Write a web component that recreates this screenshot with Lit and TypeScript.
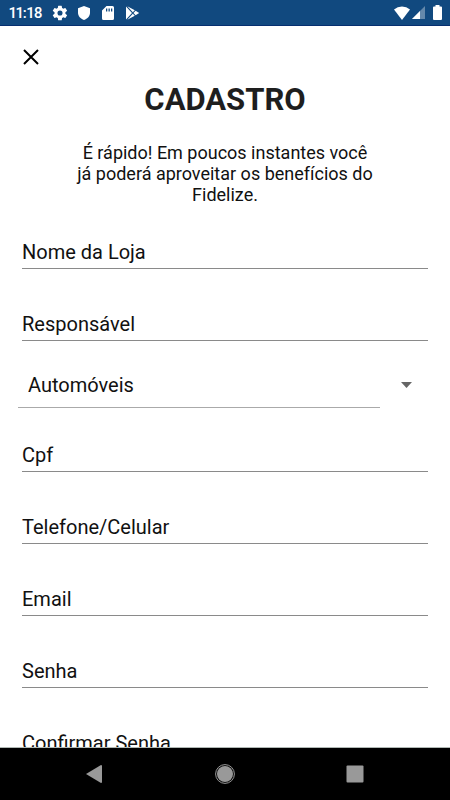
import { LitElement, html, css, svg } from "lit";
import { customElement, property } from "lit/decorators.js";

@customElement("status-bar")
class StatusBar extends LitElement {
  static styles = css`
    :host {
      display: flex;
      align-items: center;
      justify-content: space-between;
      box-sizing: border-box;
      height: 26px;
      padding: 0 8px 0 9px;
      background: #11497f;
      border-bottom: 1px solid #062f70;
      color: #fff;
      flex: none;
    }
    .left,
    .right {
      display: flex;
      align-items: center;
    }
    .left {
      gap: 8px;
    }
    .right {
      gap: 2px;
    }
    time {
      width: 35px;
      font: 500 15px/24px Roboto, sans-serif;
      font-variant-numeric: proportional-nums;
    }
    svg {
      display: block;
      fill: #fff;
    }
    .battery {
      margin-left: 6px;
    }
  `;

  render() {
    return html`
      <div class="left">
        <time>11:18</time>
        <svg width="16" height="16" viewBox="1 1 22 22" aria-label="Configurações">
          <path d="M19.4 13a7.6 7.6 0 0 0 0-2l2.1-1.6a.5.5 0 0 0 .1-.7l-2-3.4a.5.5 0 0 0-.6-.2l-2.5 1a7.3 7.3 0 0 0-1.7-1l-.4-2.6a.5.5 0 0 0-.5-.5h-4a.5.5 0 0 0-.5.5L9 5.1a7.3 7.3 0 0 0-1.7 1l-2.5-1a.5.5 0 0 0-.6.2l-2 3.4a.5.5 0 0 0 .1.7L4.5 11a7.6 7.6 0 0 0 0 2l-2.2 1.6a.5.5 0 0 0-.1.7l2 3.4c.1.2.4.3.6.2l2.5-1a7.3 7.3 0 0 0 1.7 1l.4 2.6c0 .3.2.5.5.5h4c.3 0 .5-.2.5-.5l.4-2.6a7.3 7.3 0 0 0 1.7-1l2.5 1c.2.1.5 0 .6-.2l2-3.4a.5.5 0 0 0-.1-.7zM12 15.5a3.5 3.5 0 1 1 0-7 3.5 3.5 0 0 1 0 7z" />
        </svg>
        <svg width="16" height="16" viewBox="0 0 16 16" aria-label="Segurança">
          <path d="M8 1l6 2.300v4.500c0 3.300-2.500 6-6 7.200-3.500-1.200-6-3.900-6-7.200V3.300z" />
        </svg>
        <svg width="16" height="16" viewBox="0 0 16 16" aria-label="Cartão SD">
          <path fill-rule="evenodd" d="M6.500 1H12.500q1.500 0 1.500 1.500v11q0 1.500-1.500 1.500h-9Q2 15 2 13.500v-8zM6 3.500v3h1.300v-3zm2.500 0v3h1.300v-3zm2.500 0v3h1.300v-3z" />
        </svg>
        <svg width="16" height="16" viewBox="0 0 16 16" aria-label="Play Store">
          <path d="M2 1.500v13l6-6.500zM3.300 1.300l5.500 6 2-2zM3.300 14.700l5.500-6 2 2zM11.600 5.800L9.500 8l2.100 2.200L15.200 8z" />
        </svg>
      </div>
      <div class="right">
        <svg width="16" height="14" viewBox="0 0 16 14" aria-label="Wi-Fi">
          <path d="M8 14L0 3.500Q3.500 0.500 8 0.500T16 3.500z" />
        </svg>
        <svg width="13" height="13" viewBox="0 0 13 13" aria-label="Sinal">
          <path d="M13 0v13H0z" fill-opacity="0.35" />
          <path d="M8 5v8H0z" />
        </svg>
        <svg class="battery" width="9" height="15" viewBox="0 0 9 15" aria-label="Bateria">
          <path d="M2.500 0h4v1.500H8q1 0 1 1v11.500q0 1-1 1H1q-1 0-1-1V2.500q0-1 1-1h1.500z" />
        </svg>
      </div>
    `;
  }
}

@customElement("text-field")
class TextField extends LitElement {
  @property() label = "";
  @property() type = "text";

  static styles = css`
    :host {
      display: block;
    }
    input {
      display: block;
      box-sizing: border-box;
      width: 100%;
      height: 34px;
      padding: 0;
      border: 0;
      border-bottom: 1px solid #8a8a8a;
      border-radius: 0;
      outline: 0;
      background: none;
      color: #111;
      font: 400 20px/24px Roboto, sans-serif;
    }
    input::placeholder {
      color: #111;
      opacity: 1;
    }
    input:focus {
      border-bottom-color: #11497f;
    }
  `;

  render() {
    return html`<input type=${this.type} placeholder=${this.label} aria-label=${this.label} />`;
  }
}

@customElement("nav-bar")
class NavBar extends LitElement {
  static styles = css`
    :host {
      display: flex;
      justify-content: center;
      align-items: center;
      box-sizing: border-box;
      height: 53px;
      flex: none;
      gap: 82px;
      background: #000;
      border-top: 1px solid #b0b8b4;
    }
    button {
      display: grid;
      place-items: center;
      width: 48px;
      height: 48px;
      padding: 0;
      border: 0;
      background: none;
    }
    svg {
      display: block;
      fill: #999;
    }
  `;

  render() {
    const shapes = [
      { name: "Voltar", shape: svg`<path d="M1 10L16 1q1 0 1 1v16q0 1-1 1z" />` },
      {
        name: "Início",
        shape: svg`<circle cx="10" cy="10" r="8" /><circle cx="10" cy="10" r="9.4" fill="none" stroke="#999" />`,
      },
      { name: "Recentes", shape: svg`<rect x="1.5" y="1.5" width="17" height="17" rx="1" />` },
    ];
    return shapes.map(
      (s) => html`<button aria-label=${s.name}>
        <svg width="20" height="20" viewBox="0 0 20 20">${s.shape}</svg>
      </button>`
    );
  }
}

@customElement("app-root")
class AppRoot extends LitElement {
  static styles = css`
    :host {
      display: flex;
      flex-direction: column;
      height: 100vh;
      background: #fff;
      color: #111;
      font-family: Roboto, sans-serif;
    }
    main {
      flex: 1;
      min-height: 0;
      overflow-y: auto;
      scrollbar-width: none;
    }
    .close {
      display: grid;
      place-items: center;
      width: 32px;
      height: 32px;
      margin: 15px 0 0 15px;
      padding: 0;
      border: 0;
      background: none;
    }
    h1 {
      margin: 9px 0 0;
      text-align: center;
      color: #1e1e1e;
      font-size: 31px;
      line-height: 36px;
      font-weight: 700;
    }
    .intro {
      max-width: 298px;
      margin: 24px auto 0;
      text-align: center;
      font-size: 18px;
      line-height: 21px;
    }
    form {
      display: flex;
      flex-direction: column;
      gap: 38px;
      margin: 30px 22px 38px;
    }
    .picker {
      display: flex;
      align-items: center;
      margin: -17px 0 -8px -4px;
    }
    select {
      flex: 1;
      height: 46px;
      padding: 0 0 0 10px;
      border: 0;
      border-bottom: 1px solid #aaa;
      border-radius: 0;
      outline: 0;
      appearance: none;
      background: none;
      color: #111;
      font: 400 20px/24px Roboto, sans-serif;
    }
    .arrow {
      flex: none;
      padding: 0 16px 0 21px;
      fill: #666;
    }
  `;

  render() {
    return html`
      <status-bar></status-bar>
      <main>
        <button class="close" aria-label="Fechar">
          <svg width="16" height="16" viewBox="0 0 16 16">
            <path d="M1 1L15 15M15 1L1 15" fill="none" stroke="#000" stroke-width="2" />
          </svg>
        </button>
        <h1>CADASTRO</h1>
        <p class="intro">
          É rápido! Em poucos instantes você já poderá aproveitar os benefícios do Fidelize.
        </p>
        <form>
          <text-field label="Nome da Loja"></text-field>
          <text-field label="Responsável"></text-field>
          <div class="picker">
            <select aria-label="Categoria">
              <option>Automóveis</option>
            </select>
            <svg class="arrow" width="11" height="6" viewBox="0 0 11 6">
              <path d="M0 0h11L5.5 6z" />
            </svg>
          </div>
          <text-field label="Cpf"></text-field>
          <text-field label="Telefone/Celular" type="tel"></text-field>
          <text-field label="Email" type="email"></text-field>
          <text-field label="Senha" type="password"></text-field>
          <text-field label="Confirmar Senha" type="password"></text-field>
        </form>
      </main>
      <nav-bar></nav-bar>
    `;
  }
}
